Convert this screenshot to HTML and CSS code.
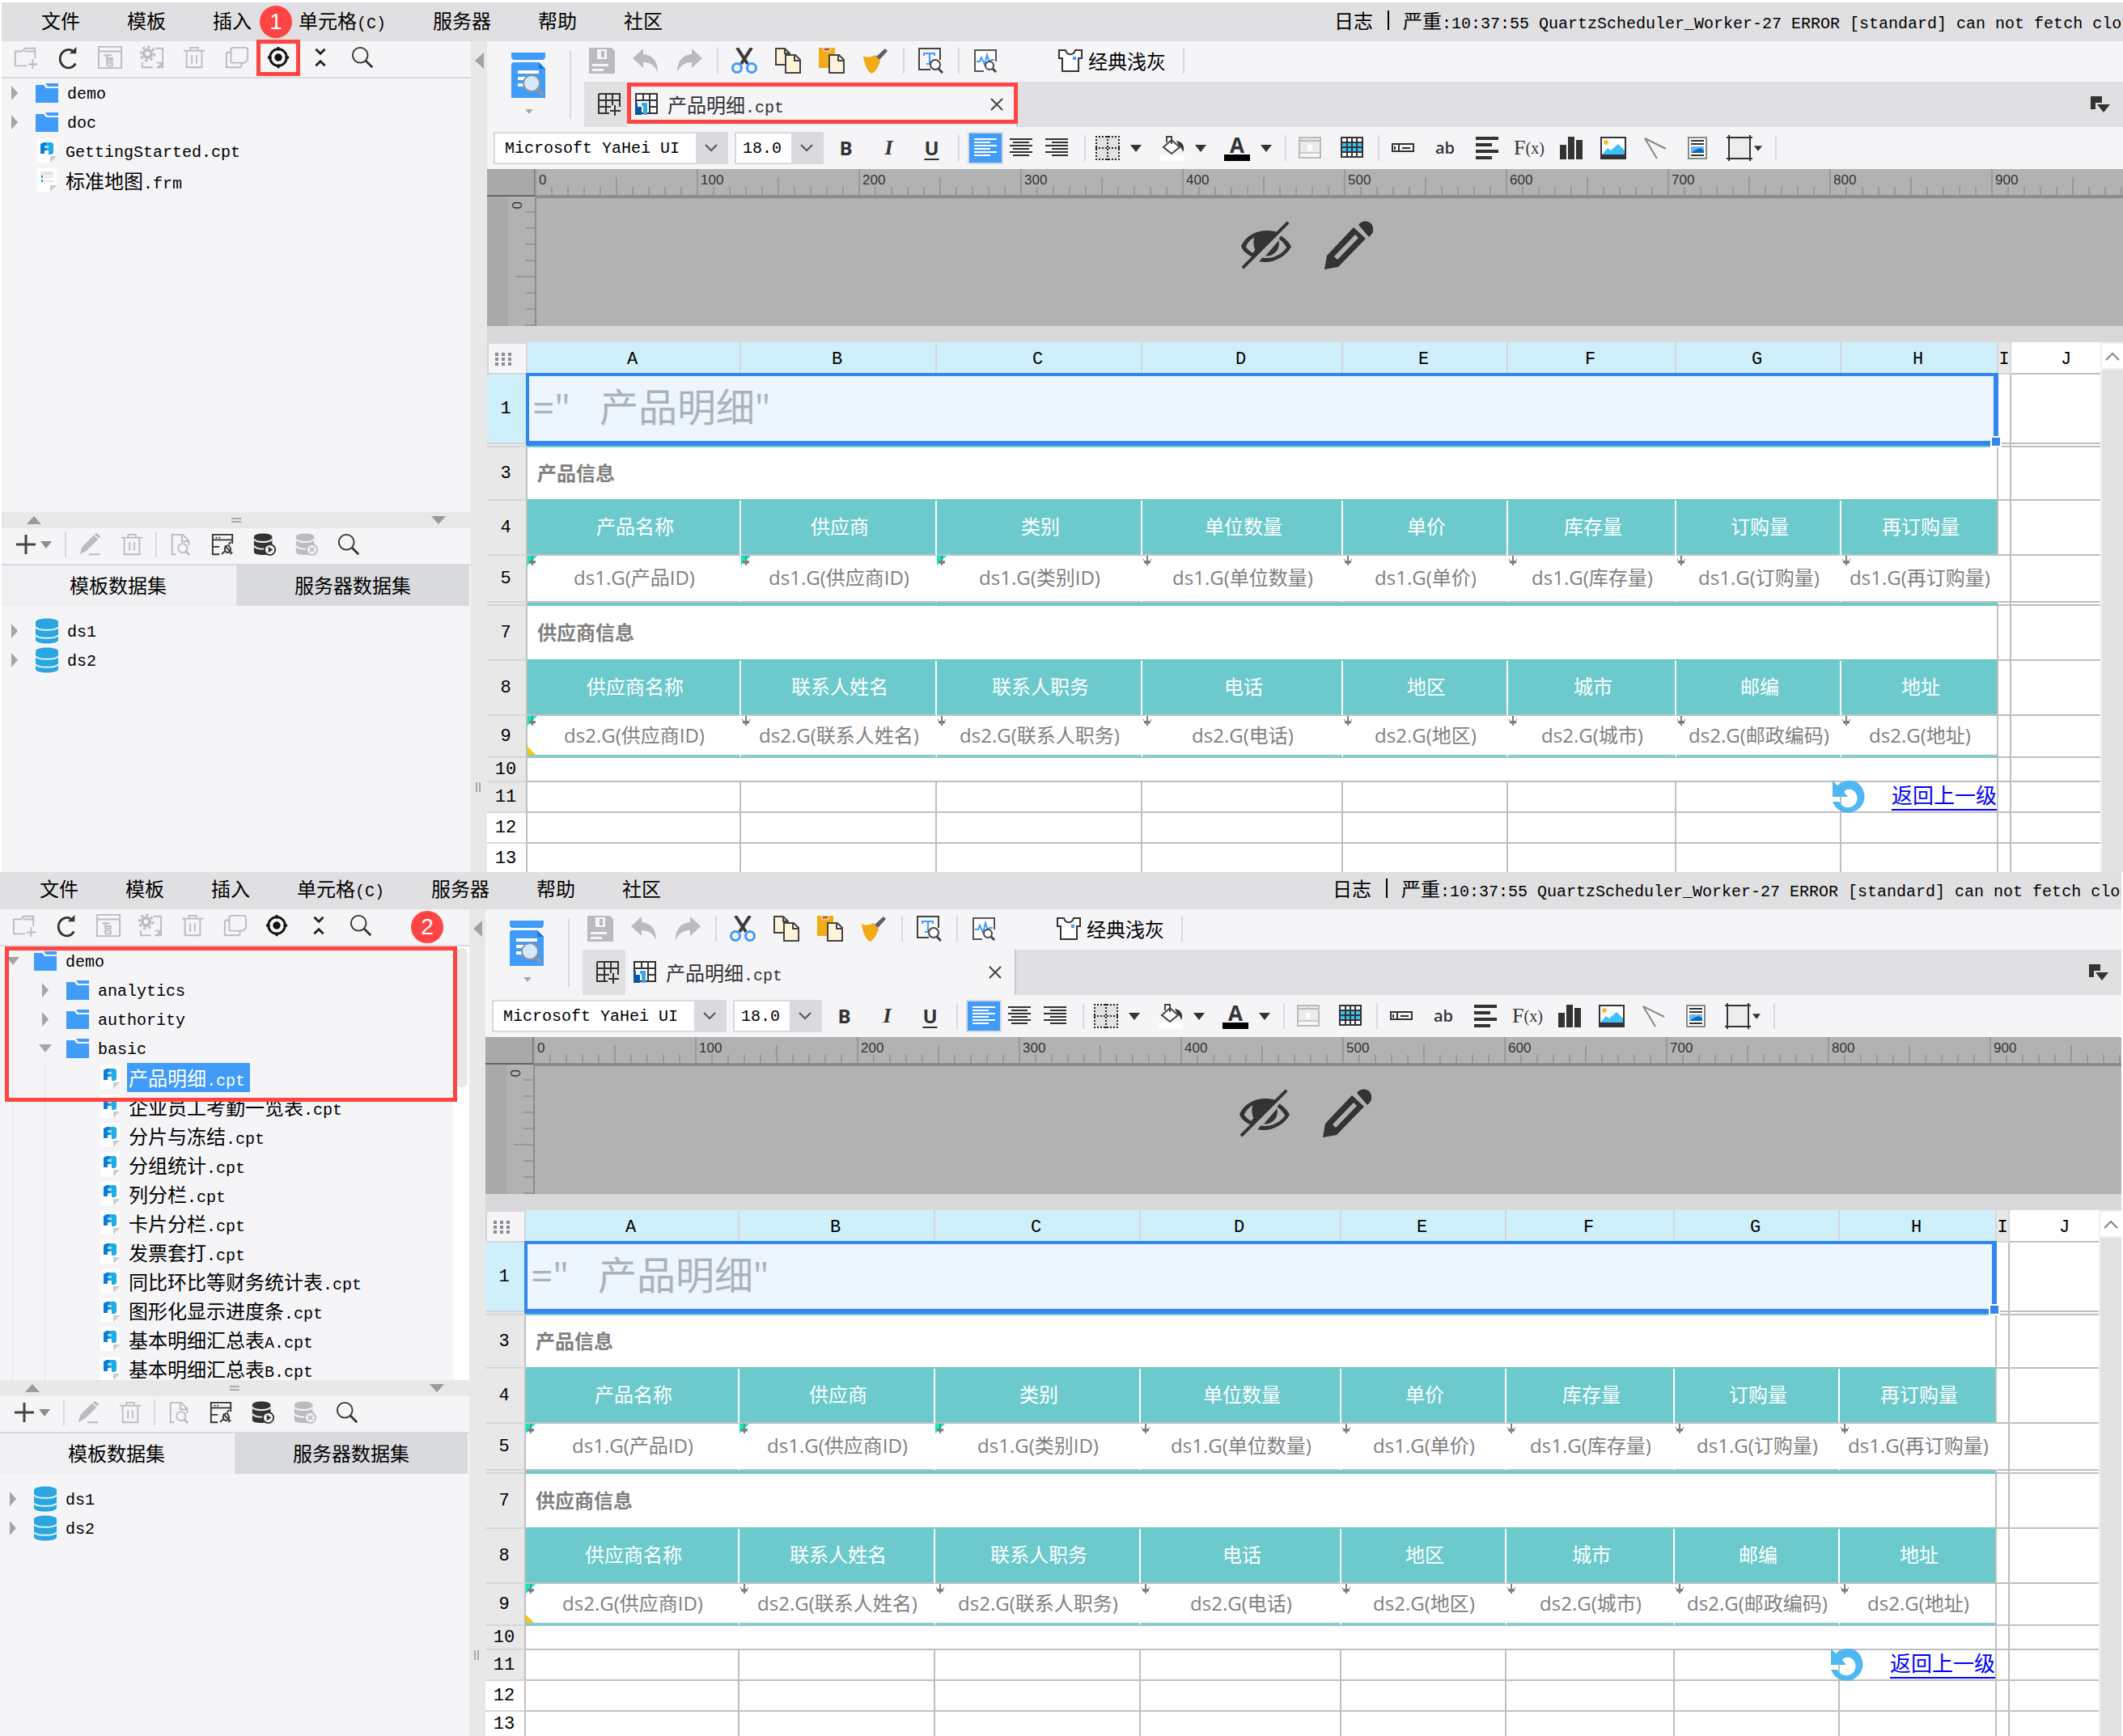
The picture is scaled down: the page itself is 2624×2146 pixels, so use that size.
FILE: index.html
```html
<!DOCTYPE html>
<html lang="zh-CN">
<head>
<meta charset="utf-8">
<title>产品明细.cpt</title>
<link rel="stylesheet" href="styles.css">
</head>
<body>

<svg class="sprite" aria-hidden="true">
  <symbol id="new-folder" viewBox="0 0 32 32"><g fill="none" stroke="#bcbcbe" stroke-width="2"><path d="M17 27H2V8h9l4-4h13v13M14 8h14"/><path d="M25 18v13M19 25h12"/></g></symbol>
  <symbol id="refresh" viewBox="0 0 32 32"><path d="M26 24A11 12 0 1 1 23 8" fill="none" stroke="#333" stroke-width="3"/><path d="M18 11h9V2z" fill="#333"/></symbol>
  <symbol id="form" viewBox="0 0 32 32"><path d="M1 2h30v28H1zM1 8h30M12 13v14M8 13h10M12 17h7v3h-7M12 23h7v4h-7" fill="none" stroke="#bcbcbe" stroke-width="2"/></symbol>
  <symbol id="gear-doc" viewBox="0 0 32 32"><g fill="none" stroke="#bcbcbe"><circle cx="10" cy="11" r="5" stroke-width="4"/><circle cx="10" cy="11" r="9" stroke-width="3" stroke-dasharray="3.5 3.5"/><path d="M20 4h10v25h-8M3 22v7h14M22 23h7v6M25 28l4-4" stroke-width="2"/></g></symbol>
  <symbol id="trash" viewBox="0 0 32 32"><path d="M2 7h28M11 7V3h10v4M6 7v22h20V7M13 13v11M19 13v11" fill="none" stroke="#bcbcbe" stroke-width="2"/></symbol>
  <symbol id="copy-tree" viewBox="0 0 32 32"><path d="M12 3h16a3 3 0 0 1 3 3v13l-4 4H11a2 2 0 0 1-2-2V6a3 3 0 0 1 3-3zM9 9H6a3 3 0 0 0-3 3v17h17a3 3 0 0 0 3-3v-3" fill="none" stroke="#bcbcbe" stroke-width="2"/></symbol>
  <symbol id="locate" viewBox="0 0 32 32"><circle cx="16" cy="16" r="11" fill="none" stroke="#111" stroke-width="3"/><circle cx="16" cy="16" r="5" fill="#111"/><path d="M16 2v5M16 25v5M2 16h5M25 16h5" stroke="#111" stroke-width="3"/></symbol>
  <symbol id="collapse" viewBox="0 0 32 32"><path d="M10 5l6 6 6-6M10 27l6-6 6 6" fill="none" stroke="#222" stroke-width="3"/></symbol>
  <symbol id="search" viewBox="0 0 32 32"><circle cx="13" cy="13" r="10" fill="none" stroke="#333" stroke-width="2"/><path d="M20 20l9 9" stroke="#333" stroke-width="3"/></symbol>
  <symbol id="folder" viewBox="0 0 28 24"><path d="M0 2h10l3 4h15v18H0z" fill="#409bf9"/><path d="M12 0h16v4H15z" fill="#409bf9"/></symbol>
  <symbol id="cpt-file" viewBox="0 0 24 30"><path d="M0 0h24v20l-8 9H0z" fill="#fff"/><path d="M16 21h8l-8 8z" fill="#ccc"/><path d="M4 6l4-2h4v10H9v4H4z" fill="#0a7bd6"/><path d="M11 4h7l2 2v11l-2 2h-4v-5h-3z" fill="#1fade8"/><path d="M9 8h5v3H9z" fill="#9fdaf6"/></symbol>
  <symbol id="frm-file" viewBox="0 0 24 30"><path d="M0 0h24v20l-8 9H0z" fill="#fff"/><path d="M16 21h8l-8 8z" fill="#ccc"/><path d="M4 4h16v5H4zM8 10h12v2H8zM8 15h12v2H8z" fill="#e4e4e6"/><path d="M5 9h2v3H5zM5 14h2v3H5z" fill="#1b8fe0"/></symbol>
  <symbol id="dataset" viewBox="0 0 28 32"><path d="M0 5C0-1 28-1 28 5v22c0 6-28 6-28 0z" fill="#2ca6e0"/><path d="M0 11c2 5 26 5 28 0M0 21c2 5 26 5 28 0" fill="none" stroke="#e4f4fc" stroke-width="2"/></symbol>
  <symbol id="plus" viewBox="0 0 24 24"><path d="M12 0v24M0 12h24" stroke="#444" stroke-width="3"/></symbol>
  <symbol id="caret" viewBox="0 0 14 9"><path d="M0 0h14L7 9z" fill="currentColor"/></symbol>
  <symbol id="edit" viewBox="0 0 32 32"><path d="M3 29l3-10L21 4l6 5-15 15zM22 3l3-2 5 4-2 3zM15 28h14v2H15z" fill="#bcbcbe"/></symbol>
  <symbol id="doc-search" viewBox="0 0 32 32"><path d="M10 29H5V3h14l8 8v6M18 3v9h9" fill="none" stroke="#bcbcbe" stroke-width="2"/><circle cx="19" cy="21" r="6" fill="none" stroke="#bcbcbe" stroke-width="2"/><path d="M23 25l5 5" stroke="#bcbcbe" stroke-width="3"/></symbol>
  <symbol id="connect" viewBox="0 0 32 32"><path d="M12 29H3V3h26v12M3 10h26M3 19h9M7 7h2M11 7h2" fill="none" stroke="#333" stroke-width="2"/><path d="M15 29l4-4M19 18l8 8M20 19c4-5 9 3 5 7-4 2-8-2-5-7M24 16l3-3M26 29l3-3" fill="none" stroke="#333" stroke-width="2"/></symbol>
  <symbol id="db-run" viewBox="0 0 32 32"><path d="M2 6c0-6 24-6 24 0v20c0 5-24 5-24 0z" fill="#333"/><path d="M2 9c3 5 21 5 24 0M2 18c3 4 12 5 16 3" fill="none" stroke="#f5f5f8" stroke-width="2"/><circle cx="23" cy="23" r="7" fill="#f5f5f8" stroke="#333" stroke-width="2"/><path d="M21 19l6 4-6 4z" fill="#333"/></symbol>
  <symbol id="db-stop" viewBox="0 0 32 32"><path d="M2 6c0-6 24-6 24 0v20c0 5-24 5-24 0z" fill="#bcbcbe"/><path d="M2 9c3 5 21 5 24 0M2 18c3 4 12 5 16 3" fill="none" stroke="#f5f5f8" stroke-width="2"/><circle cx="23" cy="23" r="7" fill="#f5f5f8" stroke="#bcbcbe" stroke-width="2"/><path d="M20 20l6 6M26 20l-6 6" stroke="#bcbcbe" stroke-width="2"/></symbol>
  <symbol id="preview" viewBox="0 0 42 56"><path d="M0 0h42v6l-2 3H2L0 6zM2 12h32l8 8v36H0V14z" fill="#409bf9"/><path d="M34 12l8 8h-8z" fill="#1d76cf"/><path d="M8 22h26v4H8zM8 30h10v4H8zM8 38h10v4H8z" fill="#fff"/><circle cx="25" cy="38" r="10" fill="#d6e9fb" stroke="#8b97a3" stroke-width="2"/><path d="M32 45l7 7" stroke="#8b97a3" stroke-width="4"/></symbol>
  <symbol id="save" viewBox="0 0 32 32"><path d="M0 0h28l4 4v28H0z" fill="#bbbbbd"/><path d="M10 2h12v12H10zM4 20h20v3H4zM4 26h14v3H4z" fill="#f5f5f8"/><path d="M15 4h4v8h-4z" fill="#bbbbbd"/></symbol>
  <symbol id="undo" viewBox="0 0 32 32"><path d="M0 13L13 1v7c13 1 18 10 18 22-4-8-9-12-18-12v7z" fill="#bbbbbd"/></symbol>
  <symbol id="redo" viewBox="0 0 32 32"><path d="M32 13L19 1v7C6 9 1 18 1 30c4-8 9-12 18-12v7z" fill="#bbbbbd"/></symbol>
  <symbol id="cut" viewBox="0 0 32 32"><path d="M7 0l13 20M25 0L12 20" stroke="#3b3b3d" stroke-width="4"/><circle cx="7" cy="25" r="5.5" fill="none" stroke="#409bf9" stroke-width="3"/><circle cx="25" cy="25" r="5.5" fill="none" stroke="#409bf9" stroke-width="3"/></symbol>
  <symbol id="copy" viewBox="0 0 32 32"><g fill="#fff3da" stroke="#444" stroke-width="2"><path d="M1 1h11l6 6v14H1zM12 1v6h6"/><path d="M13 9h12l6 6v16H13zM24 9v7h7"/></g></symbol>
  <symbol id="paste" viewBox="0 0 32 32"><path d="M0 0h20v25H0z" fill="#f0ab17"/><path d="M6 0h8v4H6z" fill="#c0531c" stroke="#fff"/><path d="M13 9h12l6 6v16H13zM24 9v7h7" fill="#fff3da" stroke="#444" stroke-width="2"/></symbol>
  <symbol id="brush" viewBox="0 0 32 32"><path d="M1 10c6 3 10 1 15-1l6 8c-2 4-4 12-11 15C6 29 2 20 1 10z" fill="#f0ab17"/><path d="M17 11L28 1l3 3-10 11z" fill="#5b5f6b"/></symbol>
  <symbol id="text-search" viewBox="0 0 32 32"><path d="M16 27H2V1h26v14" fill="none" stroke="#444" stroke-width="2"/><path d="M7 6h15v4h-2V8h-4v11h3v2h-8v-2h3V8H9v2H7z" fill="#409bf9"/><circle cx="22" cy="21" r="6" fill="#fff" stroke="#444" stroke-width="2"/><path d="M26 26l5 5" stroke="#444" stroke-width="3"/></symbol>
  <symbol id="wave-search" viewBox="0 0 32 32"><path d="M14 29H3V3h26v14" fill="#fff" stroke="#555" stroke-width="2"/><path d="M5 17h4l2-5 4 9 3-12 3 9 2-3h4" fill="none" stroke="#409bf9" stroke-width="2"/><circle cx="21" cy="22" r="5" fill="#fff" stroke="#444" stroke-width="2"/><path d="M25 26l4 4" stroke="#444" stroke-width="3"/></symbol>
  <symbol id="shirt" viewBox="0 0 30 30"><path d="M1 2h8c2 7 10 7 12 0h8v10h-4v16H5V12H1z" fill="#fff" stroke="#333" stroke-width="2"/><path d="M18 10h4v4h-4z" fill="#409bf9"/></symbol>
  <symbol id="new-sheet" viewBox="0 0 28 28"><path d="M1 1h26v16M1 1v24h13M1 9h26M10 1v24M18 1v14M1 17h15" fill="none" stroke="#333" stroke-width="2"/><path d="M21 15v13M15 22h13" stroke="#333" stroke-width="2"/></symbol>
  <symbol id="sheet" viewBox="0 0 28 28"><path d="M1 1h26v24H1zM1 9h26M10 1v8M18 1v24M18 17h9" fill="#fff" stroke="#333" stroke-width="2"/><path d="M0 12h3v5h5v10H0z" fill="#0c57a3"/><path d="M8 12h7v15h-5V16H8z" fill="#35a9e4"/></symbol>
  <symbol id="close" viewBox="0 0 16 16"><path d="M1 1l14 14M15 1L1 15" stroke="#444" stroke-width="2"/></symbol>
  <symbol id="tab-list" viewBox="0 0 24 20"><path d="M0 0h14v8H6v8H0z" fill="#333"/><path d="M8 10h16l-8 10z" fill="#333"/></symbol>
  <symbol id="chevron-down" viewBox="0 0 16 10"><path d="M1 1l7 7 7-7" fill="none" stroke="#555" stroke-width="2"/></symbol>
  <symbol id="align-left" viewBox="0 0 28 24"><path d="M0 1h28M0 5h20M0 9h28M0 13h20M0 17h28M0 21h20" stroke="currentColor" stroke-width="2"/></symbol>
  <symbol id="align-center" viewBox="0 0 28 24"><path d="M0 1h28M4 5h20M0 9h28M4 13h20M0 17h28M4 21h20" stroke="currentColor" stroke-width="2"/></symbol>
  <symbol id="align-right" viewBox="0 0 28 24"><path d="M0 1h28M8 5h20M0 9h28M8 13h20M0 17h28M8 21h20" stroke="currentColor" stroke-width="2"/></symbol>
  <symbol id="borders" viewBox="0 0 30 30"><path d="M1 1h28v28H1z" fill="#e2e2e4"/><path d="M0 1h30M0 15h30M0 29h30M1 0v30M15 0v30M29 0v30" stroke="#222" stroke-width="2" stroke-dasharray="2 2"/></symbol>
  <symbol id="fill" viewBox="0 0 30 32"><path d="M0 24h30v8H0z" fill="#fff"/><path d="M4 15l10-9 10 9-10 8zM8 9V2h6v9" fill="#fff" stroke="#444" stroke-width="2"/><path d="M20 7c8 1 11 8 8 14-1-4-3-7-5-8z" fill="#333"/></symbol>
  <symbol id="widget" viewBox="0 0 28 28"><path d="M1 1h26v25H1zM1 5h26" fill="#ebebed" stroke="#bbb" stroke-width="2"/><path d="M14 1v4M2 20h24" stroke="#ccc" stroke-width="2"/><path d="M2 21h24v4H2z" fill="#f8f8fa"/><path d="M11 10h6v7h-6z" fill="#fff"/></symbol>
  <symbol id="table" viewBox="0 0 28 28"><path d="M1 1h26v24H1z" fill="#fff"/><path d="M1 7h26v11H1z" fill="#3dc1fb"/><path d="M1 1h26v24H1zM1 7h26M1 13h26M1 19h26M8 1v24M14 1v24M20 1v24" fill="none" stroke="#333" stroke-width="2"/></symbol>
  <symbol id="field" viewBox="0 0 28 12"><path d="M1 1h26v9H1zM9 1v9M4 4v4M13 6h10" fill="none" stroke="#333" stroke-width="2"/></symbol>
  <symbol id="rich-text" viewBox="0 0 28 28"><path d="M0 2h28M0 10h20M0 18h28M0 26h20" stroke="#333" stroke-width="4"/></symbol>
  <symbol id="chart" viewBox="0 0 28 28"><path d="M0 10h8v18H0zM10 0h8v28h-8zM20 4h8v24h-8z" fill="#333"/></symbol>
  <symbol id="picture" viewBox="0 0 32 28"><path d="M1 1h30v26H1z" fill="#fff" stroke="#333" stroke-width="2"/><path d="M2 22l7-8 4 3 9-8 8 8v6H2z" fill="#3dc1fb"/><path d="M1 22h30v5H1z" fill="#333"/><circle cx="7" cy="7" r="3" fill="#f7bb3a"/></symbol>
  <symbol id="slash" viewBox="0 0 28 28"><path d="M1 2l26 13M1 2l15 25" fill="none" stroke="#888" stroke-width="2"/></symbol>
  <symbol id="page" viewBox="0 0 24 28"><path d="M1 1h22v26H1z" fill="#fff" stroke="#888" stroke-width="2"/><path d="M4 5h16M4 9h16M4 23h16" stroke="#333" stroke-width="2"/><path d="M4 12h16v8H4z" fill="#6db4f8"/><path d="M4 20l6-4 6-2 4 3v3z" fill="#0d68bd"/></symbol>
  <symbol id="frame" viewBox="0 0 32 32"><path d="M3 3h26v26H3z" fill="#ececec"/><path d="M3 0v32M29 0v32M0 3h32M0 29h32" stroke="#333" stroke-width="2"/></symbol>
  <symbol id="eye-off" viewBox="0 0 64 60"><path d="M14 45C6 41 1 36 0 31 8 15 26 8 45 13l-4 6-20 26-3 3z" fill="#333"/><path d="M6 32c2-5 6-9 11-12-2 6-1 12 1 16l-3 4c-4-2-7-5-9-8z" fill="#b2b2b2"/><path d="M51 18c6 4 11 9 13 14-8 14-24 22-41 19l4-5c12 2 24-3 31-13-2-4-6-8-10-11z" fill="#333"/><path d="M48 24c2 10-4 20-17 20z" fill="#333"/><path d="M4 61L62 3" stroke="#b2b2b2" stroke-width="5"/><path d="M2 59L60 1" stroke="#333" stroke-width="4"/></symbol>
  <symbol id="pencil" viewBox="0 0 60 60"><path d="M0 60l3-17L36 8l15 14-34 35z" fill="#333"/><path d="M12 44l26-27 4 4-26 27z" fill="#b2b2b2"/><path d="M42 5c6-8 20-5 18 8 0 2-3 5-5 7z" fill="#333"/></symbol>
  <symbol id="chevron-up" viewBox="0 0 18 12"><path d="M1 11l8-8 8 8" fill="none" stroke="#888" stroke-width="2"/></symbol>
  <symbol id="arrow-mark" viewBox="0 0 12 12"><path d="M5 0h2v6h3v3l-3 1v2H5v-2L2 9V6h3zM1 4h1v2H1zM10 4h1v2h-1z" fill="#7f7f7f"/></symbol>
  <symbol id="anchor-mark" viewBox="0 0 12 12"><path d="M0 0h12L0 12z" fill="#00f2c0"/><path d="M5 0h2v6h3v3l-3 1v2H5v-2L2 9V6h3z" fill="#7f7f7f"/></symbol>
  <symbol id="back" viewBox="0 0 40 40"><path d="M0 0l6 6C16-3 30-2 36 8c6 10 4 20-4 27-10 8-26 6-32-9h8c5 9 15 9 20 3 5-7 2-16-5-18-4-1-7 0-9 3l5 6H0z" fill="#4fb8f2"/></symbol>
</svg>

<template id="menubar">
  <nav class="menu" aria-label="菜单">
    <button>文件</button><button>模板</button><button>插入</button><button>单元格<span class="mono">(C)</span></button><button>服务器</button><button>帮助</button><button>社区</button>
  </nav>
  <div class="log"><button>日志</button><i class="bar"></i><span>严重<span class="mono">:10:37:55 QuartzScheduler_Worker-27 ERROR [standard] can not fetch clou</span></span></div>
</template>

<template id="tree-tools">
  <button class="tool" aria-label="新建文件夹"><svg><use href="#new-folder"/></svg></button>
  <button class="tool" aria-label="刷新"><svg><use href="#refresh"/></svg></button>
  <button class="tool" aria-label="属性"><svg><use href="#form"/></svg></button>
  <button class="tool" aria-label="设置"><svg><use href="#gear-doc"/></svg></button>
  <button class="tool" aria-label="删除"><svg><use href="#trash"/></svg></button>
  <button class="tool" aria-label="复制"><svg><use href="#copy-tree"/></svg></button>
  <button class="tool locate" aria-label="定位"><svg><use href="#locate"/></svg></button>
  <button class="tool" aria-label="折叠"><svg><use href="#collapse"/></svg></button>
  <button class="tool" aria-label="搜索"><svg><use href="#search"/></svg></button>
</template>

<template id="datasets">
  <div class="splitter"><i class="tri up"></i><i class="grip"></i><i class="tri down"></i></div>
  <div class="tools">
    <button class="add" aria-label="添加"><svg><use href="#plus"/></svg><svg class="caret"><use href="#caret"/></svg></button>
    <i class="sep"></i>
    <button class="tool" aria-label="编辑"><svg><use href="#edit"/></svg></button>
    <button class="tool" aria-label="删除"><svg><use href="#trash"/></svg></button>
    <i class="sep"></i>
    <button class="tool" aria-label="预览"><svg><use href="#doc-search"/></svg></button>
    <button class="tool" aria-label="连接"><svg><use href="#connect"/></svg></button>
    <button class="tool" aria-label="执行"><svg><use href="#db-run"/></svg></button>
    <button class="tool" aria-label="停止"><svg><use href="#db-stop"/></svg></button>
    <button class="tool" aria-label="搜索"><svg><use href="#search"/></svg></button>
  </div>
  <div class="ds-tabs"><button class="on">模板数据集</button><button>服务器数据集</button></div>
  <ul class="tree ds-tree">
    <li><div class="row"><i class="tw"></i><svg class="cyl"><use href="#dataset"/></svg><span class="mono">ds1</span></div></li>
    <li><div class="row"><i class="tw"></i><svg class="cyl"><use href="#dataset"/></svg><span class="mono">ds2</span></div></li>
  </ul>
</template>

<template id="workspace">
  <div class="divider"><i class="fold"></i><i class="vgrip"></i></div>
  <main class="work">
    <div class="head">
      <button class="preview" aria-label="预览"><svg class="big"><use href="#preview"/></svg><svg class="small"><use href="#caret"/></svg></button>
      <div class="head-main">
        <div class="top-tools">
          <button class="tool" aria-label="保存"><svg><use href="#save"/></svg></button>
          <button class="tool" aria-label="撤销"><svg><use href="#undo"/></svg></button>
          <button class="tool" aria-label="重做"><svg><use href="#redo"/></svg></button>
          <i class="sep"></i>
          <button class="tool" aria-label="剪切"><svg><use href="#cut"/></svg></button>
          <button class="tool" aria-label="复制"><svg><use href="#copy"/></svg></button>
          <button class="tool" aria-label="粘贴"><svg><use href="#paste"/></svg></button>
          <button class="tool" aria-label="格式刷"><svg><use href="#brush"/></svg></button>
          <i class="sep"></i>
          <button class="tool" aria-label="查找"><svg><use href="#text-search"/></svg></button>
          <i class="sep"></i>
          <button class="tool" aria-label="性能"><svg><use href="#wave-search"/></svg></button>
          <button class="theme"><svg><use href="#shirt"/></svg>经典浅灰</button>
          <i class="sep"></i>
        </div>
        <div class="file-tabs">
          <button class="new" aria-label="新建"><svg><use href="#new-sheet"/></svg></button>
          <div class="file-tab"><svg><use href="#sheet"/></svg><span>产品明细<span class="mono">.cpt</span></span><button class="x" aria-label="关闭"><svg><use href="#close"/></svg></button></div>
          <button class="list" aria-label="标签列表"><svg><use href="#tab-list"/></svg></button>
        </div>
      </div>
    </div>
    <div class="format">
      <label class="combo font"><select aria-label="字体"><option>Microsoft YaHei UI</option></select><span><svg><use href="#chevron-down"/></svg></span></label>
      <label class="combo size"><select aria-label="字号"><option>18.0</option></select><span><svg><use href="#chevron-down"/></svg></span></label>
      <div class="group text"><button><b>B</b></button><button><em>I</em></button><button><u>U</u></button></div>
      <div class="group align">
        <button class="on" aria-label="左对齐"><svg><use href="#align-left"/></svg></button>
        <button aria-label="居中"><svg><use href="#align-center"/></svg></button>
        <button aria-label="右对齐"><svg><use href="#align-right"/></svg></button>
      </div>
      <div class="group paint">
        <button aria-label="边框"><svg><use href="#borders"/></svg><svg class="caret"><use href="#caret"/></svg></button>
        <button aria-label="填充"><svg><use href="#fill"/></svg><svg class="caret"><use href="#caret"/></svg></button>
        <button aria-label="字体颜色"><span class="ink">A</span><svg class="caret"><use href="#caret"/></svg></button>
      </div>
      <div class="group cells">
        <button aria-label="合并"><svg><use href="#widget"/></svg></button>
        <button aria-label="表格"><svg><use href="#table"/></svg></button>
      </div>
      <div class="group insert">
        <button aria-label="控件"><svg class="flat"><use href="#field"/></svg></button>
        <button class="ab">ab</button>
        <button aria-label="富文本"><svg><use href="#rich-text"/></svg></button>
        <button class="fx">F<small>(x)</small></button>
        <button aria-label="图表"><svg><use href="#chart"/></svg></button>
        <button aria-label="图片"><svg class="wide"><use href="#picture"/></svg></button>
        <button aria-label="斜线"><svg><use href="#slash"/></svg></button>
        <button aria-label="子报表"><svg><use href="#page"/></svg></button>
        <button class="frame" aria-label="悬浮元素"><svg class="tall"><use href="#frame"/></svg><svg class="caret"><use href="#caret"/></svg></button>
      </div>
    </div>
    <div class="canvas">
      <div class="corner"></div>
      <div class="ruler-x"><span>0</span><span>100</span><span>200</span><span>300</span><span>400</span><span>500</span><span>600</span><span>700</span><span>800</span><span>900</span></div>
      <div class="ruler-y"><span>0</span></div>
      <div class="stage"><svg><use href="#eye-off"/></svg><svg><use href="#pencil"/></svg></div>
    </div>
    <div class="sheet">
      <table>
        <colgroup><col class="c-row"><col class="c-a"><col class="c-b"><col class="c-c"><col class="c-d"><col class="c-e"><col class="c-f"><col class="c-g"><col class="c-h"><col class="c-i"><col></colgroup>
        <thead><tr><th class="all"><i></i></th><th>A</th><th>B</th><th>C</th><th>D</th><th>E</th><th>F</th><th>G</th><th>H</th><th class="i">I</th><th class="j">J</th></tr></thead>
        <tbody>
          <tr class="r1"><th class="sel">1</th><td colspan="8" class="title"><div>="&ensp; 产品明细"</div><i class="handle"></i></td><td></td><td></td></tr>
          <tr class="thin"><th></th><td colspan="8" class="teal-line"></td><td></td><td></td></tr>
          <tr class="r3"><th>3</th><td colspan="8" class="section">产品信息</td><td></td><td></td></tr>
          <tr class="names"><th>4</th><td>产品名称</td><td>供应商</td><td>类别</td><td>单位数量</td><td>单价</td><td>库存量</td><td>订购量</td><td>再订购量</td><td></td><td></td></tr>
          <tr class="vals v5"><th>5</th><td><svg><use href="#anchor-mark"/></svg>ds1.G(产品ID)</td><td><svg><use href="#anchor-mark"/></svg>ds1.G(供应商ID)</td><td><svg><use href="#anchor-mark"/></svg>ds1.G(类别ID)</td><td><svg><use href="#arrow-mark"/></svg>ds1.G(单位数量)</td><td><svg><use href="#arrow-mark"/></svg>ds1.G(单价)</td><td><svg><use href="#arrow-mark"/></svg>ds1.G(库存量)</td><td><svg><use href="#arrow-mark"/></svg>ds1.G(订购量)</td><td><svg><use href="#arrow-mark"/></svg>ds1.G(再订购量)</td><td></td><td></td></tr>
          <tr class="thin"><th></th><td colspan="8" class="teal-line"></td><td></td><td></td></tr>
          <tr class="r7"><th>7</th><td colspan="8" class="section">供应商信息</td><td></td><td></td></tr>
          <tr class="names"><th>8</th><td>供应商名称</td><td>联系人姓名</td><td>联系人职务</td><td>电话</td><td>地区</td><td>城市</td><td>邮编</td><td>地址</td><td></td><td></td></tr>
          <tr class="vals v9"><th>9</th><td><svg><use href="#anchor-mark"/></svg><i class="warn"></i>ds2.G(供应商ID)</td><td><svg><use href="#arrow-mark"/></svg>ds2.G(联系人姓名)</td><td><svg><use href="#arrow-mark"/></svg>ds2.G(联系人职务)</td><td><svg><use href="#arrow-mark"/></svg>ds2.G(电话)</td><td><svg><use href="#arrow-mark"/></svg>ds2.G(地区)</td><td><svg><use href="#arrow-mark"/></svg>ds2.G(城市)</td><td><svg><use href="#arrow-mark"/></svg>ds2.G(邮政编码)</td><td><svg><use href="#arrow-mark"/></svg>ds2.G(地址)</td><td></td><td></td></tr>
          <tr class="r10"><th>10</th><td colspan="8" class="open"></td><td></td><td></td></tr>
          <tr class="plain"><th>11</th><td></td><td></td><td></td><td></td><td></td><td></td><td></td><td class="back"><svg><use href="#back"/></svg><a href="#">返回上一级</a></td><td></td><td></td></tr>
          <tr class="plain"><th class="out">12</th><td></td><td></td><td></td><td></td><td></td><td></td><td></td><td></td><td></td><td></td></tr>
          <tr class="last"><th class="out">13</th><td></td><td></td><td></td><td></td><td></td><td></td><td></td><td></td><td></td><td></td></tr>
        </tbody>
      </table>
      <div class="scroll"><button aria-label="向上滚动"><svg><use href="#chevron-up"/></svg></button></div>
    </div>
  </main>
</template>

<section class="designer first">
  <header class="menubar"><div data-part="menubar"></div><span class="badge">1</span></header>
  <div class="body">
    <aside class="side">
      <div class="tools tree-tools"><div data-part="tree-tools"></div></div>
      <div class="files">
        <ul class="tree">
          <li><div class="row"><i class="tw"></i><svg class="fold-icon"><use href="#folder"/></svg><span class="mono">demo</span></div></li>
          <li><div class="row"><i class="tw"></i><svg class="fold-icon"><use href="#folder"/></svg><span class="mono">doc</span></div></li>
          <li><div class="row"><svg class="file"><use href="#cpt-file"/></svg><span class="mono">GettingStarted.cpt</span></div></li>
          <li><div class="row"><svg class="file"><use href="#frm-file"/></svg><span>标准地图<span class="mono">.frm</span></span></div></li>
        </ul>
      </div>
      <div data-part="datasets"></div>
    </aside>
    <div data-part="workspace"></div>
  </div>
</section>

<section class="designer second">
  <header class="menubar"><div data-part="menubar"></div></header>
  <div class="body">
    <aside class="side">
      <div class="tools tree-tools"><div data-part="tree-tools"></div><span class="badge">2</span></div>
      <div class="files">
        <ul class="tree">
          <li><div class="row"><i class="tw open"></i><svg class="fold-icon"><use href="#folder"/></svg><span class="mono">demo</span></div>
            <ul>
              <li><div class="row"><i class="tw"></i><svg class="fold-icon"><use href="#folder"/></svg><span class="mono">analytics</span></div></li>
              <li><div class="row"><i class="tw"></i><svg class="fold-icon"><use href="#folder"/></svg><span class="mono">authority</span></div></li>
              <li><div class="row"><i class="tw open"></i><svg class="fold-icon"><use href="#folder"/></svg><span class="mono">basic</span></div>
                <ul>
                  <li><div class="row"><svg class="file"><use href="#cpt-file"/></svg><span class="picked">产品明细<span class="mono">.cpt</span></span></div></li>
                  <li><div class="row"><svg class="file"><use href="#cpt-file"/></svg><span>企业员工考勤一览表<span class="mono">.cpt</span></span></div></li>
                  <li><div class="row"><svg class="file"><use href="#cpt-file"/></svg><span>分片与冻结<span class="mono">.cpt</span></span></div></li>
                  <li><div class="row"><svg class="file"><use href="#cpt-file"/></svg><span>分组统计<span class="mono">.cpt</span></span></div></li>
                  <li><div class="row"><svg class="file"><use href="#cpt-file"/></svg><span>列分栏<span class="mono">.cpt</span></span></div></li>
                  <li><div class="row"><svg class="file"><use href="#cpt-file"/></svg><span>卡片分栏<span class="mono">.cpt</span></span></div></li>
                  <li><div class="row"><svg class="file"><use href="#cpt-file"/></svg><span>发票套打<span class="mono">.cpt</span></span></div></li>
                  <li><div class="row"><svg class="file"><use href="#cpt-file"/></svg><span>同比环比等财务统计表<span class="mono">.cpt</span></span></div></li>
                  <li><div class="row"><svg class="file"><use href="#cpt-file"/></svg><span>图形化显示进度条<span class="mono">.cpt</span></span></div></li>
                  <li><div class="row"><svg class="file"><use href="#cpt-file"/></svg><span>基本明细汇总表<span class="mono">A.cpt</span></span></div></li>
                  <li><div class="row"><svg class="file"><use href="#cpt-file"/></svg><span>基本明细汇总表<span class="mono">B.cpt</span></span></div></li>
                </ul>
              </li>
            </ul>
          </li>
        </ul>
        <div class="tree-scroll"><i></i></div>
        <div class="callout"></div>
      </div>
      <div data-part="datasets"></div>
    </aside>
    <div data-part="workspace"></div>
  </div>
</section>

<script src="designer.js"></script>
</body>
</html>
```
FILE: designer.js
```js
// Both designer windows share the same bars and sheet; stamp them from the templates.
document.querySelectorAll('[data-part]').forEach(function (slot) {
  var part = document.getElementById(slot.dataset.part);
  slot.replaceWith(part.content.cloneNode(true));
});
```
FILE: styles.css
```css
* { box-sizing: border-box; }
body {
  margin: 0;
  padding-top: 3px;
  background: #fff;
  color: #000;
  font-family: "Noto Sans CJK SC", sans-serif;
  font-size: 24px;
  line-height: 36px;
}
button { border: 0; padding: 0; margin: 0; background: none; color: inherit; font: inherit; white-space: nowrap; }
svg { display: block; flex: none; }
ul { list-style: none; margin: 0; padding: 0; }
.sprite { position: absolute; width: 0; height: 0; }
.mono { font-family: "Liberation Mono", monospace; font-size: 20px; line-height: 20px; }

.designer { display: flex; flex-direction: column; overflow: hidden; }
.first { margin-left: 2px; }
.second { margin-right: 2px; }

/* menu bar */
.menubar { position: relative; display: flex; align-items: center; height: 48px; padding: 0 0 4px 49px; background: #e0e0e2; }
.second .menubar { height: 46px; padding-bottom: 6px; }
.menu { display: flex; gap: 58px; }
.log { display: flex; align-items: center; width: 975px; margin-left: auto; overflow: hidden; white-space: nowrap; }
.bar { flex: none; width: 2px; height: 24px; margin: 0 17px 0 18px; background: #000; }
.badge {
  position: absolute; width: 40px; height: 40px; border-radius: 50%;
  background: #ff4444; color: #fff; text-align: center;
  font-family: "Liberation Sans", sans-serif; font-size: 28px; line-height: 40px;
}
.first .badge { left: 319px; top: 4px; }
.second .badge { left: 508px; top: 2px; }

.body { display: flex; }
.side { flex: none; width: 580px; display: flex; flex-direction: column; background: #f5f5f8; }

/* side toolbars */
.tools { position: relative; display: flex; align-items: center; height: 46px; padding: 0 0 4px 9px; border-bottom: 2px solid #d9dadd; }
.tree-tools { padding-left: 4px; }
.tool { position: relative; display: flex; justify-content: center; width: 52px; }
.tool svg { width: 32px; height: 32px; }
.side .tool svg { width: 30px; height: 30px; }
.sep { flex: none; width: 2px; height: 32px; margin: 0 3px; background: #d9dadd; }
.add { display: flex; align-items: center; gap: 6px; width: 66px; padding-left: 9px; color: #8c8c8e; }
.add svg { width: 24px; height: 24px; }
.add .caret { width: 14px; height: 9px; }
.first .locate::after { content: ""; position: absolute; inset: -7px -1px -8px -1px; border: 5px solid #ff4444; }

/* trees */
.files { position: relative; display: flex; height: 536px; overflow: hidden; }
.tree { flex: 1; }
.tree ul { padding-left: 40px; background: linear-gradient(#ececef, #ececef) 15px 0 / 2px 100% no-repeat; }
.row { display: flex; align-items: center; height: 36px; padding-left: 12px; white-space: nowrap; }
.row > .mono { padding-top: 3px; }
.tw { width: 8px; height: 18px; margin-right: 22px; background: #a6a6a8; clip-path: polygon(0 0, 100% 50%, 0 100%); }
.tw.open { width: 16px; height: 10px; margin: 0 18px 0 -4px; clip-path: polygon(0 0, 100% 0, 50% 100%); }
.fold-icon { width: 28px; height: 24px; margin-right: 11px; }
.file { width: 24px; height: 30px; margin: 0 11px 0 32px; }
.cyl { width: 28px; height: 32px; margin-right: 11px; }
.picked { margin-left: -2px; padding: 0 6px 0 2px; background: #409bf9; color: #fff; }
.tree-scroll { width: 20px; padding: 2px 2px 0 4px; background: #fff; }
.tree-scroll i { display: block; height: 172px; border-radius: 6px; background: #e8e8e8; }
.callout { position: absolute; left: 6px; right: 15px; top: 0; height: 192px; border: 5px solid #ff4444; }

.splitter { display: flex; align-items: center; justify-content: space-between; height: 20px; padding: 0 31px; background: #e8e8e8; }
.tri { width: 18px; height: 10px; background: #9a9a9c; }
.up { clip-path: polygon(50% 0, 100% 100%, 0 100%); }
.down { clip-path: polygon(0 0, 100% 0, 50% 100%); }
.grip { width: 12px; height: 6px; border: solid #a9a9ab; border-width: 2px 0; }
.ds-tabs { display: flex; gap: 2px; height: 50px; padding-right: 2px; }
.ds-tabs button { flex: 1; padding-bottom: 3px; background: #d9dadd; }
.ds-tabs .on { background: #f0f0f2; }
.ds-tree { padding-top: 13px; }

.divider { flex: none; position: relative; width: 20px; background: #e8e8e8; }
.fold { position: absolute; left: 5px; top: 14px; width: 11px; height: 20px; background: #a2a2a4; clip-path: polygon(100% 0, 100% 100%, 0 50%); }
.vgrip { position: absolute; left: 6px; top: 916px; width: 6px; height: 12px; border: solid #a9a9ab; border-width: 0 2px; }

/* workspace header */
.work { flex: 1; min-width: 0; background: #f5f5f8; }
.head { display: flex; height: 106px; }
.preview { position: relative; display: flex; flex-direction: column; align-items: center; width: 104px; margin-right: 11px; padding: 14px 0 0 0; color: #a6a6a8; }
.preview::after { content: ""; position: absolute; right: 0; top: 12px; bottom: 10px; width: 2px; background: #d9dadd; }
.big { width: 42px; height: 56px; margin-right: 2px; }
.small { width: 10px; height: 6px; margin-top: 14px; }
.head-main { flex: 1; min-width: 0; }
.top-tools { display: flex; align-items: center; height: 50px; padding-bottom: 2px; }
.top-tools .tool { width: 54px; }
.top-tools .sep { margin: 0 5px 0 7px; }
.theme { display: flex; align-items: center; gap: 7px; margin: 0 14px 0 63px; }
.theme svg { width: 30px; height: 30px; }
.file-tabs { display: flex; align-items: center; height: 56px; margin-left: 5px; background: #e0e0e2; }
.new { width: 53px; padding-left: 17px; }
.new svg, .file-tab > svg { width: 28px; height: 28px; }
.file-tab { position: relative; display: flex; align-items: center; width: 483px; height: 56px; padding: 0 16px 0 10px; border: solid #c9cacd; border-width: 0 2px 0 0; background: #f5f5f8; color: #333; }
.file-tab > svg { margin-right: 12px; }
.first .file-tab::after { content: ""; position: absolute; inset: 1px -2px 4px 0; border: 5px solid #ff4444; }
.x { margin-left: auto; }
.x svg { width: 16px; height: 16px; }
.list { margin: 0 16px 0 auto; }
.list svg { width: 24px; height: 20px; }

/* format bar */
.format { display: flex; align-items: center; height: 52px; padding-left: 8px; color: #333; }
.combo { flex: none; display: flex; height: 40px; border: 2px solid #d9dadd; background: #fff; }
.font { width: 290px; margin-right: 8px; }
.size { width: 110px; }
.combo select { flex: 1; min-width: 0; appearance: none; border: 0; padding: 0 0 0 12px; background: #fff; color: #000; font-family: "Liberation Mono", monospace; font-size: 20px; }
.size select { padding-left: 8px; }
.combo span { display: flex; align-items: center; justify-content: center; width: 38px; background: #d9dadd; }
.combo svg { width: 16px; height: 10px; }
.group { position: relative; display: flex; align-items: center; height: 40px; }
.group::after { content: ""; position: absolute; right: 0; width: 2px; height: 32px; background: #d9dadd; }
.group button { display: flex; align-items: center; justify-content: center; height: 40px; }
.group svg { width: 28px; height: 28px; }
.group .caret { width: 14px; height: 9px; }
.text { padding: 0 8px 0 1px; font-family: "Open Sans", sans-serif; }
.text button { width: 53px; }
.text em { font-family: "Liberation Serif", serif; font-weight: bold; font-size: 26px; }
.text u { font-weight: bold; text-underline-offset: 4px; }
.align { padding: 0 14px 0 10px; }
.align button { width: 44px; }
.align svg { height: 24px; }
.align .on { border: 2px solid #d3d9e2; background: #409bf9; color: #fff; }
.paint { padding: 0 3px 0 7px; }
.paint button { justify-content: flex-start; gap: 13px; width: 80px; padding-left: 5px; }
.paint button + button { width: 79px; }
.paint svg { width: 30px; height: 32px; }
.ink { width: 32px; height: 32px; border-bottom: 8px solid #000; text-align: center; font-family: "Open Sans", sans-serif; font-weight: bold; font-size: 26px; line-height: 24px; }
.cells { padding: 0 8px 0 3px; }
.cells button, .insert button { width: 52px; }
.insert { padding: 0 16px 0 3px; }
.insert .flat { height: 12px; }
.insert .wide { width: 32px; }
.insert .tall { width: 32px; height: 32px; }
.insert .frame { justify-content: flex-start; gap: 2px; width: 56px; padding-left: 10px; }
.insert .frame .caret { width: 10px; height: 7px; }
.ab { font-family: "Open Sans", sans-serif; font-weight: 600; font-size: 20px; }
.fx { font-family: "Liberation Serif", serif; font-size: 26px; }
.fx small { font-size: 20px; }

/* canvas with rulers */
.canvas { display: grid; grid-template-columns: 59px 1fr; grid-template-rows: 32px 162px; background: #b2b2b2; }
.corner { background: #a9a9a9; border-right: 1px solid #777; }
.ruler-x {
  display: flex; overflow: hidden; color: #333;
  font-family: "Liberation Sans", sans-serif; font-size: 17px; line-height: 28px;
  background:
    repeating-linear-gradient(to right, #999 0 2px, transparent 2px 20px) 0 100% / 100% 10px no-repeat,
    repeating-linear-gradient(to right, #999 0 2px, transparent 2px 100px) 0 100% / 100% 22px no-repeat;
}
.ruler-x span { flex: none; width: 200px; padding-left: 3px; border-left: 2px solid #999; }
.ruler-y {
  padding: 0 0 0 26px; border-top: 2px solid #666; color: #333;
  font-family: "Liberation Sans", sans-serif; font-size: 17px; line-height: 20px;
  background:
    linear-gradient(#a9a9a9, #a9a9a9) 0 0 / 26px 100% no-repeat,
    repeating-linear-gradient(transparent 0 18px, #999 18px 20px) 100% 0 / 12px 100% no-repeat,
    repeating-linear-gradient(transparent 0 98px, #999 98px 100px) 100% 0 / 24px 100% no-repeat;
}
.ruler-y span { writing-mode: vertical-rl; }
.stage { display: flex; justify-content: center; gap: 40px; padding: 28px 55px 0 0; border: solid #8c8c8c; border-width: 4px 0 0 2px; }
.stage svg { width: 62px; height: 60px; }

/* sheet */
.sheet { display: flex; border-top: 20px solid #d9d9db; background: #fff; }
table { flex: 1; width: 100%; table-layout: fixed; border-spacing: 0; }
.c-row { width: 50px; }
.c-a { width: 264px; }
.c-b { width: 242px; }
.c-c { width: 254px; }
.c-d { width: 248px; }
.c-e { width: 204px; }
.c-f { width: 208px; }
.c-g { width: 204px; }
.c-h { width: 194px; }
.c-i { width: 16px; }
th, td { position: relative; padding: 0; border: solid #bfbfbf; border-width: 0 2px 2px 0; text-align: center; line-height: 24px; white-space: nowrap; }
th:last-child, td:last-child { border-right: 0; }
th { border-color: #d5d6dc; font-family: "Liberation Mono", monospace; font-weight: normal; font-size: 22px; }
tbody th { padding: 2px 2px 0 0; }
thead th { height: 40px; padding: 6px 3px 0 0; background: #cff0fb; }
thead .all { padding: 2px 0 0; background: #f5f5f8; border-left: 2px solid #d5d6dc; border-top: 2px solid #d9d9db; }
.all i { display: block; width: 21px; height: 16px; margin-left: 8px; background: repeating-linear-gradient(to right, transparent 0 4px, #f5f5f8 4px 8px), repeating-linear-gradient(#8c8c8e 0 4px, #f5f5f8 4px 6px); }
thead .i { padding-right: 0; background: #e8e8e8; }
thead .j { padding-left: 28px; background: #fff; border-bottom-color: #bfbfbf; }
tbody th { background: #e8e8e8; border-right-color: #bfbfbf; }
tbody .sel { background: #cff0fb; }
tbody .out { background: #fff; }
.r1 { height: 86px; }
.r3 { height: 66px; }
.r7 { height: 68px; }
.names { height: 68px; }
.v5 { height: 58px; }
.v9 { height: 52px; }
.r10 { height: 30px; }
.plain { height: 38px; }
.first .last { height: 35px; }
.second .last { height: 30px; }
.last th, .last td { border-bottom: 0; }
.thin { height: 4px; }
.thin th, .thin td { height: 4px; padding: 0; line-height: 0; font-size: 0; }
.thin .teal-line { border-color: #6dcacc; background: #6dcacc; border-right-color: #bfbfbf; }
.title div {
  position: absolute; inset: -2px -2px -4px; z-index: 1; padding-left: 4px;
  border: solid #3385f0; border-width: 4px 6px 6px 4px; background: #edf5fd; color: #abb3ba;
  font-family: "Open Sans", "Noto Sans CJK SC", sans-serif; font-size: 48px; line-height: 76px; text-align: left; white-space: pre;
}
.handle { position: absolute; z-index: 2; right: -6px; bottom: -6px; width: 14px; height: 14px; border: 2px solid #fff; background: #3385f0; }
.section { padding: 0 0 3px 12px; border-bottom-color: #6dcacc; color: #7f7f7f; font-weight: bold; text-align: left; }
.names td:nth-child(-n+9) { padding: 0 0 5px 4px; border-right-color: #fff; background: #6dcacc; background-clip: padding-box; color: #fff; }
.names td:nth-child(9) { border-right-color: #bfbfbf; }
.vals td { padding: 0 0 3px 2px; font-family: "Open Sans", "Noto Sans CJK SC", sans-serif; color: #7f7f7f; }
.vals td:nth-child(-n+9) { border-right-color: #fff; }
.vals svg { position: absolute; left: 0; top: 0; width: 12px; height: 12px; }
.v9 td:nth-child(-n+9) { padding-bottom: 1px; border-bottom: 4px solid #8cc9d0; }
.v9 td:nth-child(9) { border-right-color: #bfbfbf; }
.warn { position: absolute; left: 0; bottom: 0; width: 10px; height: 10px; background: #ffc400; clip-path: polygon(0 0, 100% 100%, 0 100%); }
.back svg { position: absolute; z-index: 1; left: -11px; top: -2px; width: 40px; height: 40px; }
.plain .back { padding-bottom: 5px; text-align: right; }
.back a { color: #00f; font-size: 26px; line-height: 24px; text-underline-offset: 7px; }

.scroll { flex: none; width: 28px; border-left: 2px solid #f0f0f2; background: #e1e1e1; }
.scroll button { display: flex; align-items: center; justify-content: center; width: 100%; height: 34px; border: solid #f0f0f2; border-width: 2px 0; background: #fff; }
.scroll svg { width: 18px; height: 12px; }
```
